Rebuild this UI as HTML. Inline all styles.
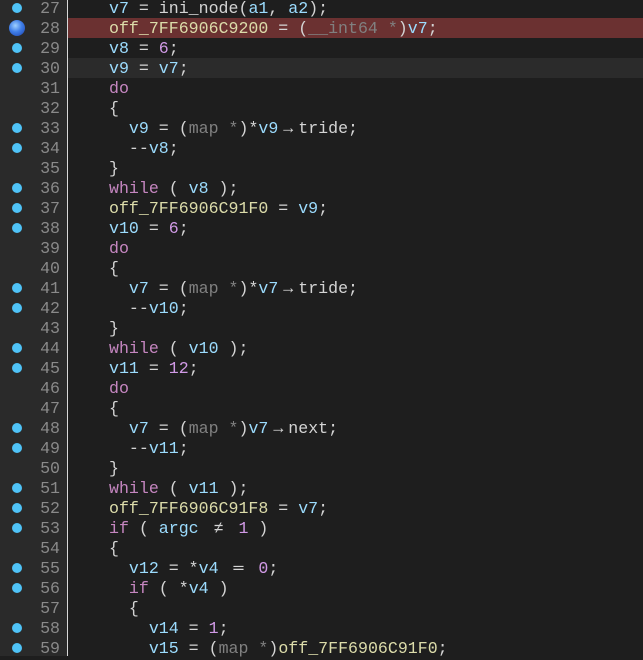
<!DOCTYPE html>
<html><head><meta charset="utf-8"><style>
html,body{margin:0;padding:0;width:643px;height:656px;overflow:hidden;background:#1e1e1e;}
#g{position:absolute;left:0;top:0;width:67px;height:656px;background:#2a2a2a;}
#sep{position:absolute;left:67px;top:0;width:1px;height:656px;background:#d8d8d8;}
#c{position:absolute;left:0;top:-2px;width:643px;font-family:"Liberation Mono",monospace;font-size:16.6px;}
.r{position:relative;height:20px;line-height:22px;white-space:pre;}
.n{position:absolute;left:0;width:60px;text-align:right;color:#8a8a8a;}
.d{position:absolute;left:12px;top:5px;width:10px;height:10px;border-radius:50%;background:#4fc3f7;}
.bd{position:absolute;left:9px;top:2px;width:16px;height:16px;border-radius:50%;background:radial-gradient(circle at 40% 35%,#9fd0ff 0,#3f7ee8 45%,#1b3fa8 100%);}
.t{position:absolute;left:109px;color:#d4d4d4;}
.hl{position:absolute;left:68px;right:0;top:0;height:20px;}
.v{color:#9cdcfe}.gl{color:#dcdcaa}.k{color:#c586c0}.num{color:#d19ae6}.ty{color:#808080}.w{color:#d4d4d4}
.l2{display:inline-block;width:2ch;text-align:center;}
</style></head><body>
<div id="g"></div><div id="sep"></div>
<div id="c">
<div class="r"><span class="d"></span><span class="n">27</span><span class="t"><span class="v">v7</span> = <span class="w">ini_node</span>(<span class="v">a1</span>, <span class="v">a2</span>);</span></div>
<div class="r"><div class="hl" style="background:#6b3131"></div><span class="bd"></span><span class="n">28</span><span class="t"><span class="gl">off_7FF6906C9200</span> = (<span class="ty">__int64 *</span>)<span class="v">v7</span>;</span></div>
<div class="r"><span class="d"></span><span class="n">29</span><span class="t"><span class="v">v8</span> = <span class="num">6</span>;</span></div>
<div class="r"><div class="hl" style="background:#2b2b2b"></div><span class="d"></span><span class="n">30</span><span class="t"><span class="v">v9</span> = <span class="v">v7</span>;</span></div>
<div class="r"><span class="n">31</span><span class="t"><span class="k">do</span></span></div>
<div class="r"><span class="n">32</span><span class="t">{</span></div>
<div class="r"><span class="d"></span><span class="n">33</span><span class="t">  <span class="v">v9</span> = (<span class="ty">map *</span>)*<span class="v">v9</span><span class="l2">→</span><span class="w">tride</span>;</span></div>
<div class="r"><span class="d"></span><span class="n">34</span><span class="t">  --<span class="v">v8</span>;</span></div>
<div class="r"><span class="n">35</span><span class="t">}</span></div>
<div class="r"><span class="d"></span><span class="n">36</span><span class="t"><span class="k">while</span> ( <span class="v">v8</span> );</span></div>
<div class="r"><span class="d"></span><span class="n">37</span><span class="t"><span class="gl">off_7FF6906C91F0</span> = <span class="v">v9</span>;</span></div>
<div class="r"><span class="d"></span><span class="n">38</span><span class="t"><span class="v">v10</span> = <span class="num">6</span>;</span></div>
<div class="r"><span class="n">39</span><span class="t"><span class="k">do</span></span></div>
<div class="r"><span class="n">40</span><span class="t">{</span></div>
<div class="r"><span class="d"></span><span class="n">41</span><span class="t">  <span class="v">v7</span> = (<span class="ty">map *</span>)*<span class="v">v7</span><span class="l2">→</span><span class="w">tride</span>;</span></div>
<div class="r"><span class="d"></span><span class="n">42</span><span class="t">  --<span class="v">v10</span>;</span></div>
<div class="r"><span class="n">43</span><span class="t">}</span></div>
<div class="r"><span class="d"></span><span class="n">44</span><span class="t"><span class="k">while</span> ( <span class="v">v10</span> );</span></div>
<div class="r"><span class="d"></span><span class="n">45</span><span class="t"><span class="v">v11</span> = <span class="num">12</span>;</span></div>
<div class="r"><span class="n">46</span><span class="t"><span class="k">do</span></span></div>
<div class="r"><span class="n">47</span><span class="t">{</span></div>
<div class="r"><span class="d"></span><span class="n">48</span><span class="t">  <span class="v">v7</span> = (<span class="ty">map *</span>)<span class="v">v7</span><span class="l2">→</span><span class="w">next</span>;</span></div>
<div class="r"><span class="d"></span><span class="n">49</span><span class="t">  --<span class="v">v11</span>;</span></div>
<div class="r"><span class="n">50</span><span class="t">}</span></div>
<div class="r"><span class="d"></span><span class="n">51</span><span class="t"><span class="k">while</span> ( <span class="v">v11</span> );</span></div>
<div class="r"><span class="d"></span><span class="n">52</span><span class="t"><span class="gl">off_7FF6906C91F8</span> = <span class="v">v7</span>;</span></div>
<div class="r"><span class="d"></span><span class="n">53</span><span class="t"><span class="k">if</span> ( <span class="v">argc</span> <span class="l2">≠</span> <span class="num">1</span> )</span></div>
<div class="r"><span class="n">54</span><span class="t">{</span></div>
<div class="r"><span class="d"></span><span class="n">55</span><span class="t">  <span class="v">v12</span> = *<span class="v">v4</span> <span class="l2">═</span> <span class="num">0</span>;</span></div>
<div class="r"><span class="d"></span><span class="n">56</span><span class="t">  <span class="k">if</span> ( *<span class="v">v4</span> )</span></div>
<div class="r"><span class="n">57</span><span class="t">  {</span></div>
<div class="r"><span class="d"></span><span class="n">58</span><span class="t">    <span class="v">v14</span> = <span class="num">1</span>;</span></div>
<div class="r"><span class="d"></span><span class="n">59</span><span class="t">    <span class="v">v15</span> = (<span class="ty">map *</span>)<span class="gl">off_7FF6906C91F0</span>;</span></div>
</div>
</body></html>
